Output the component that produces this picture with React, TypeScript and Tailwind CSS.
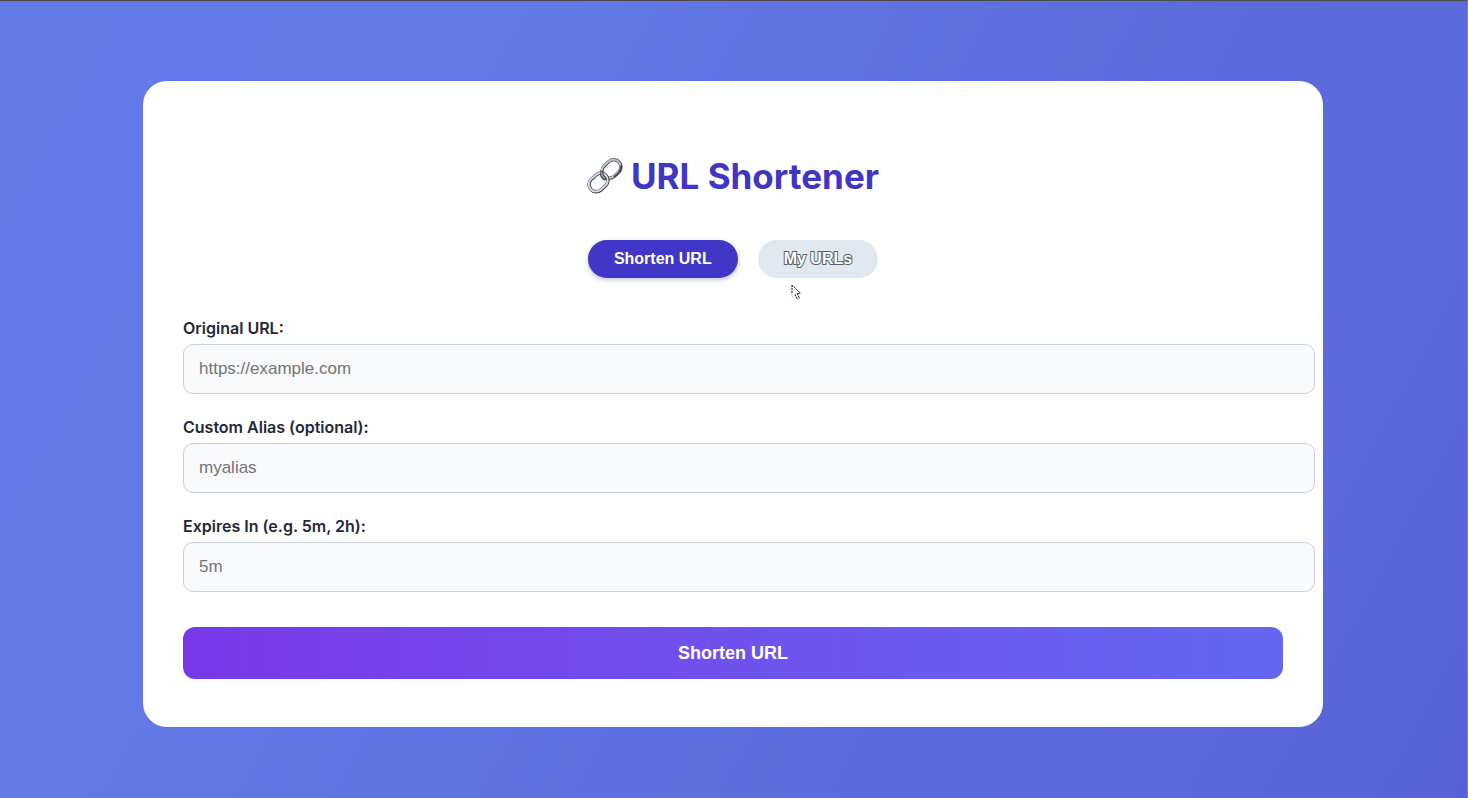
import { useState } from "react";

const fields = [
  { id: "original-url", label: "Original URL:", placeholder: "https://example.com" },
  { id: "custom-alias", label: "Custom Alias (optional):", placeholder: "myalias" },
  { id: "expires-in", label: "Expires In (e.g. 5m, 2h):", placeholder: "5m" },
];

function LinkIcon() {
  return (
    <svg viewBox="0 0 36 36" className="h-9 w-9 shrink-0" fill="none" aria-hidden="true">
      <g transform="rotate(-42 24.5 11)">
        <rect x="14.2" y="3.8" width="20.6" height="14.4" rx="7.2" stroke="#575c64" strokeWidth="3.4" />
        <rect x="14" y="3.5" width="20.6" height="14.4" rx="7.2" stroke="#c3cad4" strokeWidth="1.8" />
      </g>
      <path d="M27.5 18.500c4-2.500 6.500-6.500 6.800-10.500" stroke="#45414a" strokeWidth="1.800" strokeLinecap="round" />
      <g transform="rotate(-42 11.5 24.5)">
        <rect x="1.2" y="17.3" width="20.6" height="14.4" rx="7.2" stroke="#42474f" strokeWidth="3.4" />
        <rect x="1.1" y="17" width="20.6" height="14.4" rx="7.2" stroke="#d3dbe6" strokeWidth="2" />
      </g>
      <path d="M15 14.500c-.5 2.300.4 4.800 2.800 6.300" stroke="#42464d" strokeWidth="3.400" strokeLinecap="round" />
      <path d="M14.700 14.500c-.2 2 .6 4 2.600 5.500" stroke="#9da5b0" strokeWidth="1.300" strokeLinecap="round" />
    </svg>
  );
}

function Pointer() {
  return (
    <svg viewBox="0 0 12 17" className="pointer-events-none absolute top-[44px] left-[33px] h-[17px] w-3" aria-hidden="true">
      <path d="M1 1v12l3-2.500 2.200 5 2.600-1.200-2.200-4.600h4z" fill="#fff" stroke="#ccc" strokeWidth="1" />
      <path d="M1 1l8.500 8.500M1 1v9M4 10.500l2.200 4M6 9.500l2.300 4.500M6.500 9.500h3" stroke="#222" strokeWidth="1" strokeDasharray="2 1" fill="none" />
    </svg>
  );
}

export default function App() {
  const [tab, setTab] = useState("shorten");
  return (
    <main className="flex min-h-screen flex-col items-center overflow-x-hidden border-t border-r border-t-[#4a4a50] border-r-[#7480dc] bg-[linear-gradient(118deg,#637ae8_0%,#6279e6_30%,#5c6cdc_65%,#5b69da_85%,#5862d6_100%)] pt-20 pr-36 pb-16 pl-[143px] font-['Inter',sans-serif]">
      <section className="w-full max-w-[1180px] rounded-3xl bg-white px-10 pt-[71px] pb-12">
        <h1 className="flex items-center justify-center gap-2 text-[35px] leading-12 font-bold text-[#4036c4]">
          <LinkIcon />
          URL Shortener
        </h1>
        <nav className="mt-10 flex justify-center gap-5 font-['Liberation_Sans',Arial,sans-serif] text-base leading-[18px] font-bold">
          <button
            type="button"
            onClick={() => setTab("shorten")}
            aria-pressed={tab === "shorten"}
            className="rounded-full bg-[#4036c8] px-[26px] py-[10px] text-white shadow-[0_2px_5px_rgba(67,56,202,0.3)]"
          >
            Shorten URL
          </button>
          <div className="relative">
            <button
              type="button"
              onClick={() => setTab("list")}
              aria-pressed={tab === "list"}
              className="rounded-full bg-[#e1e8f0] px-[26px] py-[10px] text-white [-webkit-text-stroke:2px_#5b6067] [paint-order:stroke_fill]"
            >
              My URLs
            </button>
            <Pointer />
          </div>
        </nav>
        <form className="mt-[38px]" onSubmit={(event) => event.preventDefault()}>
          <div className="-mr-8 flex flex-col gap-[21px]">
            {fields.map((field) => (
              <div key={field.id} className="flex flex-col gap-1">
                <label htmlFor={field.id} className="text-base leading-6 font-semibold text-[#1f2937]">
                  {field.label}
                </label>
                <input
                  id={field.id}
                  type="text"
                  placeholder={field.placeholder}
                  className="h-[50px] w-full rounded-[10px] border border-[#c8d2de] bg-[#f8fafc] px-[15px] font-['Liberation_Sans',Arial,sans-serif] text-[17px] text-[#1f2937] outline-none placeholder:text-[#737475]"
                />
              </div>
            ))}
          </div>
          <button
            type="submit"
            className="mt-[35px] h-[52px] w-full rounded-xl bg-linear-to-r from-[#7838e8] to-[#6366f1] font-['Liberation_Sans',Arial,sans-serif] text-lg font-bold text-white"
          >
            Shorten URL
          </button>
        </form>
      </section>
    </main>
  );
}
